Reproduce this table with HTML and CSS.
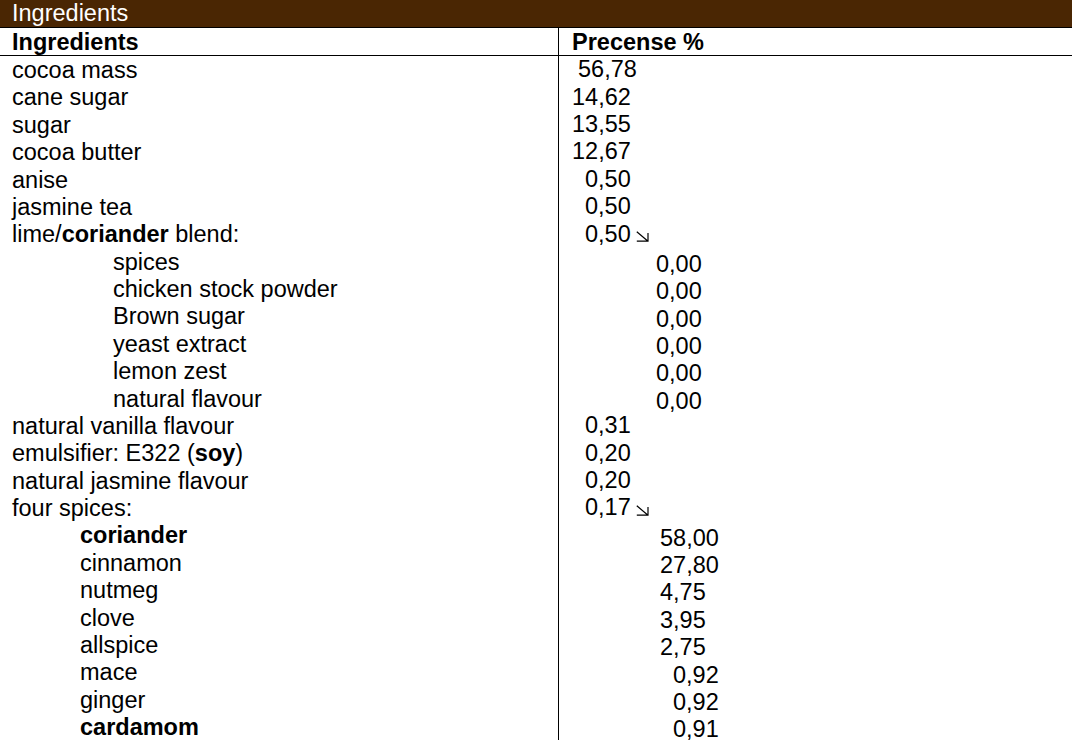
FILE: index.html
```html
<!DOCTYPE html>
<html lang="en">
<head>
<meta charset="utf-8">
<title>Ingredients</title>
<link rel="stylesheet" href="styles.css">
</head>
<body>
<div class="titlebar">Ingredients</div>
<div class="table">
  <div class="row head"><div class="lab">Ingredients</div><div class="val">Precense %</div></div>
  <div class="row first"><div class="lab">cocoa mass</div><div class="val p578">56,78</div></div>
  <div class="row"><div class="lab">cane sugar</div><div class="val">14,62</div></div>
  <div class="row"><div class="lab">sugar</div><div class="val">13,55</div></div>
  <div class="row"><div class="lab">cocoa butter</div><div class="val">12,67</div></div>
  <div class="row"><div class="lab">anise</div><div class="val p585">0,50</div></div>
  <div class="row"><div class="lab">jasmine tea</div><div class="val p585">0,50</div></div>
  <div class="row"><div class="lab">lime/<b>coriander</b> blend:</div><div class="val p585">0,50<svg class="arr" width="13" height="11" viewBox="0 0 13 11"><path d="M0.8 0.8 L12 10.2 M12 2 V10.2 H0.8" fill="none" stroke="#000" stroke-width="1.2"/></svg></div></div>
  <div class="row"><div class="lab ind2">spices</div><div class="val sub p656">0,00</div></div>
  <div class="row"><div class="lab ind2">chicken stock powder</div><div class="val sub p656">0,00</div></div>
  <div class="row"><div class="lab ind2">Brown sugar</div><div class="val sub p656">0,00</div></div>
  <div class="row"><div class="lab ind2">yeast extract</div><div class="val sub p656">0,00</div></div>
  <div class="row"><div class="lab ind2">lemon zest</div><div class="val sub p656">0,00</div></div>
  <div class="row"><div class="lab ind2">natural flavour</div><div class="val sub p656">0,00</div></div>
  <div class="row"><div class="lab">natural vanilla flavour</div><div class="val p585">0,31</div></div>
  <div class="row"><div class="lab">emulsifier: E322 (<b>soy</b>)</div><div class="val p585">0,20</div></div>
  <div class="row"><div class="lab">natural jasmine flavour</div><div class="val p585">0,20</div></div>
  <div class="row"><div class="lab">four spices:</div><div class="val p585">0,17<svg class="arr" width="13" height="11" viewBox="0 0 13 11"><path d="M0.8 0.8 L12 10.2 M12 2 V10.2 H0.8" fill="none" stroke="#000" stroke-width="1.2"/></svg></div></div>
  <div class="row"><div class="lab ind1"><b>coriander</b></div><div class="val sub p660">58,00</div></div>
  <div class="row"><div class="lab ind1">cinnamon</div><div class="val sub p660">27,80</div></div>
  <div class="row"><div class="lab ind1">nutmeg</div><div class="val sub p660">4,75</div></div>
  <div class="row"><div class="lab ind1">clove</div><div class="val sub p660">3,95</div></div>
  <div class="row"><div class="lab ind1">allspice</div><div class="val sub p660">2,75</div></div>
  <div class="row"><div class="lab ind1">mace</div><div class="val sub p673">0,92</div></div>
  <div class="row"><div class="lab ind1">ginger</div><div class="val sub p673">0,92</div></div>
  <div class="row"><div class="lab ind1"><b>cardamom</b></div><div class="val sub p673">0,91</div></div>
</div>
</body>
</html>
```
FILE: styles.css
```css
html, body {
  margin: 0;
  padding: 0;
  background: #fff;
}
body {
  font-family: "Liberation Sans", Arial, sans-serif;
  font-size: 23.5px;
  color: #000;
  overflow: hidden;
}
.titlebar {
  height: 27px;
  line-height: 27px;
  background: #4a2603;
  color: #fff;
  padding-left: 12px;
  border-bottom: 1px solid #000;
}
.table {
  display: flex;
  flex-direction: column;
  background: linear-gradient(#000, #000) 558px 0 / 1px 100% no-repeat;
}
.row {
  display: grid;
  grid-template-columns: 559px 1fr;
  box-sizing: border-box;
  height: 27.375px;
  padding-top: 1px;
  line-height: 27.375px;
  white-space: nowrap;
}
.row.head {
  height: 28px;
  line-height: 27px;
  font-weight: bold;
  border-bottom: 1px solid #000;
}
.lab {
  padding-left: 12px;
  height: 26px;
}
.lab.ind1 { padding-left: 80px; }
.lab.ind2 { padding-left: 113px; }
.val {
  padding-left: 13px;
  height: 26px;
  display: flex;
  align-items: center;
}
.val.sub { padding-top: 3px; }
.val.p578 { padding-left: 19px; }
.val.p585 { padding-left: 26px; }
.val.p656 { padding-left: 97px; }
.val.p660 { padding-left: 101px; }
.val.p673 { padding-left: 114px; }
.arr {
  margin-left: 5px;
  margin-top: 4px;
}
```
